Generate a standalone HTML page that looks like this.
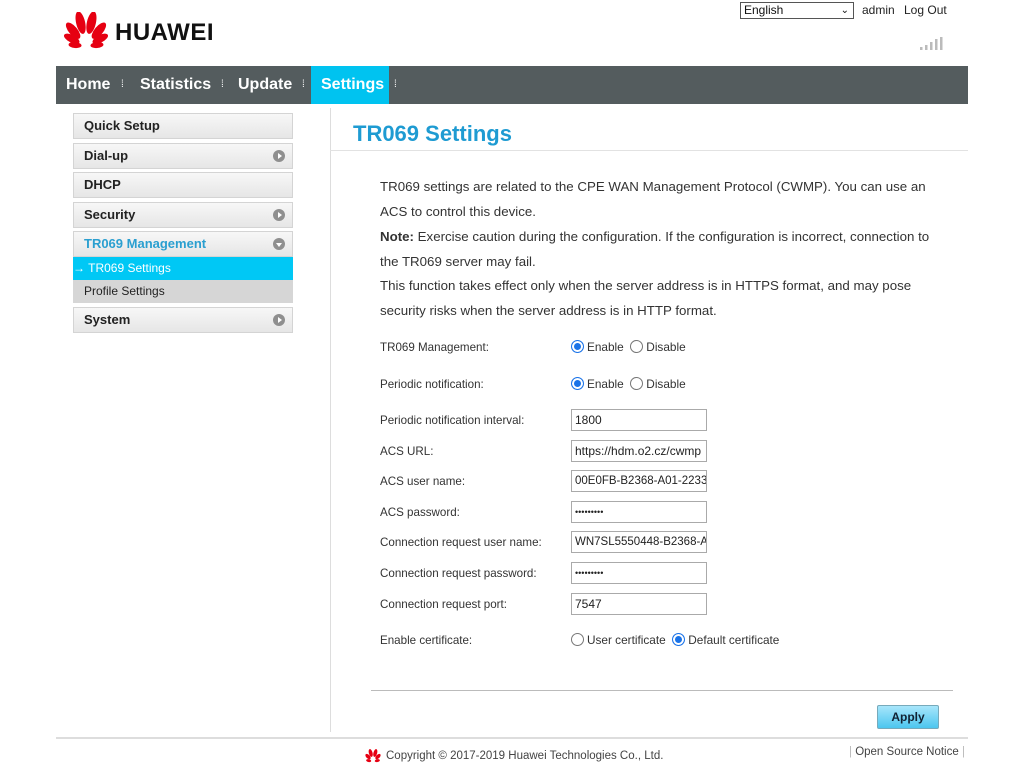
<!DOCTYPE html>
<html><head><meta charset="utf-8"><style>
*{margin:0;padding:0;box-sizing:border-box}
body{width:1024px;height:768px;background:#fff;font-family:"Liberation Sans",Arial,sans-serif;color:#333;position:relative;overflow:hidden}
.a{position:absolute;white-space:nowrap}
.nav{left:56px;top:66px;width:912px;height:38px;background:#545c5e;}
.nav span{position:absolute;top:0;height:38px;line-height:38px;color:#fff;font-weight:bold;font-size:16px}
.sep{color:#9aa;font-size:10px!important;font-weight:normal!important}
.mi{left:73px;width:220px;height:26px;border:1px solid #d4d4d4;background:linear-gradient(#f7f7f7,#e6e6e6);font-weight:bold;font-size:13px;line-height:24px;padding-left:10px;color:#222}
.arr{position:absolute;right:7px;top:6px;width:12px;height:12px;border-radius:50%;background:#8f8f8f}
.arr:after{content:"";position:absolute;left:4.5px;top:3px;border-left:4px solid #fff;border-top:3px solid transparent;border-bottom:3px solid transparent}
.arr.d:after{left:3px;top:4.5px;border-top:4px solid #fff;border-left:3px solid transparent;border-right:3px solid transparent;border-bottom:0}
.p{left:380px;font-size:13.3px;color:#333}
.l{left:380px;font-size:11.6px;color:#333;margin-top:1px}
.in{left:571px;width:136px;height:22px;border:1px solid #aaa;font-size:12px;line-height:20px;padding-left:3px;color:#222;overflow:hidden}
.r{display:inline-block;width:13px;height:13px;border-radius:50%;border:1px solid #777;vertical-align:-2px;margin-right:3px;background:#fff}
.r.on{border:1px solid #1a73e8;box-shadow:inset 0 0 0 2px #fff;background:#1a73e8}
.rad{left:571px;font-size:11.8px;color:#333}
</style></head><body>
<svg class="a" style="left:62px;top:12px" width="48" height="38" viewBox="0 0 46 38">
<g fill="#e60012">
<ellipse cx="23" cy="10" rx="4.5" ry="11.5" transform="rotate(-13 23 34)"/>
<ellipse cx="23" cy="10" rx="4.5" ry="11.5" transform="rotate(13 23 34)"/>
<ellipse cx="23" cy="14" rx="4.3" ry="10" transform="rotate(-40 23 34)"/>
<ellipse cx="23" cy="14" rx="4.3" ry="10" transform="rotate(40 23 34)"/>
<ellipse cx="23" cy="18" rx="3.8" ry="8.5" transform="rotate(-63 23 34)"/>
<ellipse cx="23" cy="18" rx="3.8" ry="8.5" transform="rotate(63 23 34)"/>
<ellipse cx="23" cy="23" rx="3" ry="6.5" transform="rotate(-85 23 34)"/>
<ellipse cx="23" cy="23" rx="3" ry="6.5" transform="rotate(85 23 34)"/>
</g></svg>
<div class="a" style="left:115px;top:19px;font-size:24px;font-weight:bold;color:#111;letter-spacing:0.5px">HUAWEI</div>
<div class="a" style="left:740px;top:2px;width:114px;height:17px;border:1px solid #555;font-size:12px;line-height:15px;padding-left:3px;color:#111">English<span style="position:absolute;right:4px;top:0;font-size:10px">&#8964;</span></div>
<div class="a" style="left:862px;top:3px;font-size:12px;color:#222">admin</div>
<div class="a" style="left:904px;top:3px;font-size:12px;color:#222">Log Out</div>
<svg class="a" style="left:920px;top:37px" width="24" height="14"><g fill="#bbb"><rect x="0" y="10" width="2.5" height="3"/><rect x="5" y="8" width="2.5" height="5"/><rect x="10" y="5" width="2.5" height="8"/><rect x="15" y="2" width="2.5" height="11"/><rect x="20" y="0" width="2.5" height="13"/></g></svg>
<div class="a nav">
<span style="left:10px">Home</span><span class="sep" style="left:65px">⁞</span>
<span style="left:84px">Statistics</span><span class="sep" style="left:165px">⁞</span>
<span style="left:182px">Update</span><span class="sep" style="left:246px">⁞</span>
<span style="left:255px;width:78px;background:#00c3f0;padding-left:10px">Settings</span><span class="sep" style="left:338px">⁞</span>
</div>
<div class="a mi" style="top:113px">Quick Setup</div>
<div class="a mi" style="top:143px">Dial-up<i class="arr"></i></div>
<div class="a mi" style="top:172px">DHCP</div>
<div class="a mi" style="top:202px">Security<i class="arr"></i></div>
<div class="a mi" style="top:231px;color:#2a9fd0">TR069 Management<i class="arr d"></i></div>
<div class="a" style="left:73px;top:257px;width:220px;height:23px;background:#00c8f5;color:#fff;font-size:12px;line-height:23px">→ TR069 Settings</div>
<div class="a" style="left:73px;top:280px;width:220px;height:23px;background:#d6d6d6;color:#222;font-size:12px;line-height:23px;padding-left:11px">Profile Settings</div>
<div class="a mi" style="top:307px">System<i class="arr"></i></div>
<div class="a" style="left:330px;top:108px;width:1px;height:624px;background:#ddd"></div>
<div class="a" style="left:353px;top:121px;font-size:22px;font-weight:bold;color:#1e9bd2">TR069 Settings</div>
<div class="a" style="left:330px;top:150px;width:638px;height:1px;background:#e2e2e2"></div>
<div class="a p" style="top:179px">TR069 settings are related to the CPE WAN Management Protocol (CWMP). You can use an</div>
<div class="a p" style="top:204px">ACS to control this device.</div>
<div class="a p" style="top:229px"><b>Note:</b> Exercise caution during the configuration. If the configuration is incorrect, connection to</div>
<div class="a p" style="top:254px">the TR069 server may fail.</div>
<div class="a p" style="top:278px">This function takes effect only when the server address is in HTTPS format, and may pose</div>
<div class="a p" style="top:303px">security risks when the server address is in HTTP format.</div>
<div class="a l" style="top:340px">TR069 Management:</div>
<div class="a rad" style="top:340px"><i class="r on"></i>Enable &nbsp;<i class="r"></i>Disable</div>
<div class="a l" style="top:377px">Periodic notification:</div>
<div class="a rad" style="top:377px"><i class="r on"></i>Enable &nbsp;<i class="r"></i>Disable</div>
<div class="a l" style="top:413px">Periodic notification interval:</div><div class="a in" style="top:409px">1800</div>
<div class="a l" style="top:444px">ACS URL:</div><div class="a in" style="top:440px">https://hdm.o2.cz/cwmp</div>
<div class="a l" style="top:474px">ACS user name:</div><div class="a in" style="top:470px;font-size:11.5px">00E0FB-B2368-A01-2233</div>
<div class="a l" style="top:505px">ACS password:</div><div class="a in" style="top:501px;font-size:9px">•••••••••</div>
<div class="a l" style="top:535px">Connection request user name:</div><div class="a in" style="top:531px;font-size:11.5px">WN7SL5550448-B2368-A</div>
<div class="a l" style="top:566px">Connection request password:</div><div class="a in" style="top:562px;font-size:9px">•••••••••</div>
<div class="a l" style="top:597px">Connection request port:</div><div class="a in" style="top:593px">7547</div>
<div class="a l" style="top:633px">Enable certificate:</div>
<div class="a rad" style="top:633px"><i class="r"></i>User certificate &nbsp;<i class="r on"></i>Default certificate</div>
<div class="a" style="left:371px;top:690px;width:582px;height:1px;background:#bbb"></div>
<div class="a" style="left:877px;top:705px;width:62px;height:24px;border:1px solid #7ab;border-radius:2px;background:linear-gradient(#a8e6fb,#4cc6ef);font-weight:bold;font-size:12px;line-height:22px;text-align:center;color:#123">Apply</div>
<div class="a" style="left:56px;top:737px;width:912px;height:2px;background:#ddd"></div>
<svg class="a" style="left:364px;top:749px" width="18" height="14" viewBox="0 0 46 38"><g fill="#e60012"><ellipse cx="23" cy="10" rx="5" ry="11" transform="rotate(-15 23 34)"/><ellipse cx="23" cy="10" rx="5" ry="11" transform="rotate(15 23 34)"/><ellipse cx="23" cy="15" rx="5" ry="9" transform="rotate(-45 23 34)"/><ellipse cx="23" cy="15" rx="5" ry="9" transform="rotate(45 23 34)"/><ellipse cx="23" cy="22" rx="4" ry="7" transform="rotate(-78 23 34)"/><ellipse cx="23" cy="22" rx="4" ry="7" transform="rotate(78 23 34)"/></g></svg>
<div class="a" style="left:386px;top:750px;font-size:11.5px;color:#444">Copyright © 2017-2019 Huawei Technologies Co., Ltd.</div>
<div class="a" style="left:849px;top:746px;font-size:11.5px;color:#444"><span style="color:#bbb">|</span> Open Source Notice <span style="color:#bbb">|</span></div>
</body></html>
